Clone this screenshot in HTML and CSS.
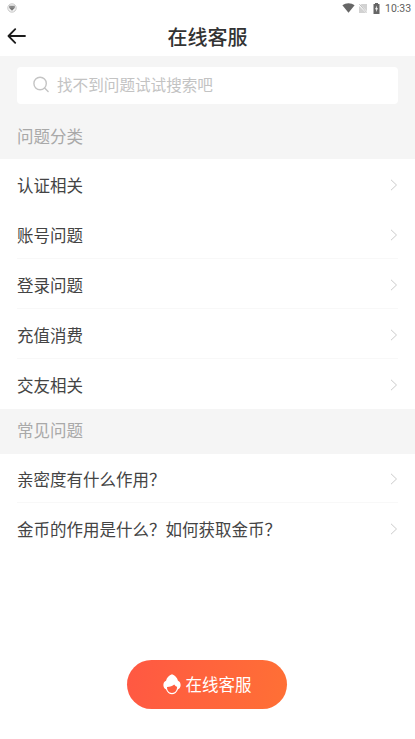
FILE: index.html
```html
<!DOCTYPE html>
<html lang="zh-CN">
<head>
<meta charset="utf-8">
<title>在线客服</title>
<link rel="stylesheet" href="styles.css">
</head>
<body>
<div class="status">
  <svg class="status-app" width="10" height="10" viewBox="0 0 10 10"><circle cx="5" cy="5" r="4.2" fill="#f4f4f4" stroke="#bbb" stroke-width=".8"/><path d="M2.3 2.7h5.4v2.2L5 7.8 2.3 4.9z" fill="#777"/><path d="M3.3 4h1.2M5.5 4h1.2" stroke="#ddd" stroke-width=".6"/></svg>
  <div class="status-right">
    <svg class="wifi" width="13" height="10" viewBox="0 0 13 10"><path d="M.4 2.3C3.8-.5 9.2-.5 12.6 2.3L6.5 9.8z" fill="#666"/></svg>
    <svg class="sim" width="8" height="9" viewBox="0 0 8 9"><path d="M2.5 0H8v9H0V2.5z" fill="#d2d2d2"/><path d="M0 .6l8 8" stroke="#fff" stroke-width="1.8"/><path d="M.4.2l7.4 8.4" stroke="#aaa" stroke-width=".8"/></svg>
    <svg class="battery" width="7" height="11" viewBox="0 0 7 11"><path d="M2 0h3v1h1.5v10H.5V1H2z" fill="#666"/><path d="M4 2.5L2 6.2h1.3L3 9l2-3.8H3.7z" fill="#fff"/></svg>
    <span class="time">10:33</span>
  </div>
</div>
<header class="header">
  <svg class="back" width="20" height="16" viewBox="0 0 20 16" fill="none" stroke="#1c1c1c" stroke-width="1.8" stroke-linecap="round" stroke-linejoin="round"><path d="M8.2 1.2L1.5 8l6.7 6.8M1.8 8H18"/></svg>
  <h1 class="title">在线客服</h1>
</header>
<section class="top">
  <div class="search">
    <svg width="17" height="17" viewBox="0 0 17 17" fill="none" stroke="#c4c4c4" stroke-width="1.4" stroke-linecap="round"><circle cx="7.1" cy="7.5" r="6.2"/><path d="M11.6 12.1l3.5 3.4"/></svg>
    <span>找不到问题试试搜索吧</span>
  </div>
  <h2 class="label">问题分类</h2>
</section>
<ul class="list categories">
  <li class="row faint"><span>认证相关</span><svg class="arrow" viewBox="0 0 8 12"><path d="M1 .8l5.5 5.2L1 11.2"/></svg></li>
  <li class="row"><span>账号问题</span><svg class="arrow" viewBox="0 0 8 12"><path d="M1 .8l5.5 5.2L1 11.2"/></svg></li>
  <li class="row"><span>登录问题</span><svg class="arrow" viewBox="0 0 8 12"><path d="M1 .8l5.5 5.2L1 11.2"/></svg></li>
  <li class="row"><span>充值消费</span><svg class="arrow" viewBox="0 0 8 12"><path d="M1 .8l5.5 5.2L1 11.2"/></svg></li>
  <li class="row last"><span>交友相关</span><svg class="arrow" viewBox="0 0 8 12"><path d="M1 .8l5.5 5.2L1 11.2"/></svg></li>
</ul>
<h2 class="label band">常见问题</h2>
<ul class="list">
  <li class="row"><span>亲密度有什么作用？</span><svg class="arrow" viewBox="0 0 8 12"><path d="M1 .8l5.5 5.2L1 11.2"/></svg></li>
  <li class="row last"><span>金币的作用是什么？如何获取金币？</span><svg class="arrow" viewBox="0 0 8 12"><path d="M1 .8l5.5 5.2L1 11.2"/></svg></li>
</ul>
<footer class="footer">
  <button class="chat">
    <svg width="18" height="21" viewBox="0 0 18 21"><path d="M9 .3C12 1.3 14.2 3.8 15 6.8c1.8.8 2.8 2.6 2.6 4.6-.1 2-1.3 3.3-2.5 3.9-1.2 3.1-3.5 5-6.1 5s-4.9-1.9-6.1-5C1.7 14.7.5 13.3.4 11.4c-.2-2 .8-3.8 2.6-4.6C3.8 3.8 6 1.3 9 .3z" fill="#fff"/><path d="M4 13c2.9 0 5.8-.9 7.2-2.4.8 1.3 1.7 1.9 2.9 2.2 0 3.7-2 6.1-5.1 6.1S4 16.6 4 13z" fill="#ff5d3f"/></svg>
    <span>在线客服</span>
  </button>
</footer>
</body>
</html>
```
FILE: styles.css
```css
* { box-sizing: border-box; }
body {
  margin: 0;
  height: 739px;
  display: flex;
  flex-direction: column;
  overflow: hidden;
  background: #fff;
  color: #444;
  font-family: "Noto Sans CJK SC", sans-serif;
}
svg { display: block; flex: none; }
h1, h2, ul { margin: 0; padding: 0; }
.status {
  height: 17px;
  flex: none;
  display: flex;
  justify-content: space-between;
  align-items: center;
  padding: 0 5px 1px 7px;
}
.status-right { display: flex; align-items: center; }
.sim { margin-left: 4px; }
.battery { margin-left: 6px; }
.time {
  width: 25px;
  margin-left: 5px;
  font: 10.5px/16px Roboto, sans-serif;
  color: #606060;
  white-space: nowrap;
  padding-top: 1px;
}
.header {
  height: 39px;
  flex: none;
  display: grid;
  grid-template-columns: 60px 1fr 60px;
  align-items: center;
}
.back { margin: 0 0 1px 7px; }
.title {
  text-align: center;
  font-size: 20px;
  line-height: 37px;
  padding-bottom: 1px;
  font-weight: 500;
  color: #333;
}
.top {
  height: 103px;
  flex: none;
  padding-top: 11px;
  background: #f5f5f5;
}
.search {
  height: 37px;
  margin: 0 17px;
  padding: 0 0 2px 16px;
  display: flex;
  align-items: center;
  gap: 7px;
  background: #fff;
  border-radius: 4px;
  font-size: 15.6px;
  line-height: 33px;
  color: #c3c3c3;
}
.search span { padding-bottom: 1px; }
.label {
  padding: 0 17px;
  font-size: 16.5px;
  font-weight: 400;
  color: #a9a9a9;
  line-height: 24px;
}
.top .label { margin-top: 20px; }
.band {
  height: 45px;
  flex: none;
  line-height: 43px;
  background: #f5f5f5;
}
.list { list-style: none; flex: none; }
.categories { height: 250px; }
.row {
  height: 50px;
  margin-left: 17px;
  padding: 1px 17px 0 0;
  display: flex;
  align-items: center;
  justify-content: space-between;
  font-size: 16.5px;
  line-height: 24px;
  background: linear-gradient(#f8f8f8, #f8f8f8) left bottom / calc(100% - 17px) 1px no-repeat;
}
.row span { padding-top: 1px; }
.band + .list { margin-top: -1px; }
.faint, .last { background: none; }
.arrow {
  width: 8px;
  height: 12px;
  fill: none;
  stroke: #cbcbcb;
  stroke-width: 1;
}
.footer {
  margin-top: auto;
  padding: 0 1px 30px 0;
  display: flex;
  justify-content: center;
}
.chat {
  width: 160px;
  height: 49px;
  padding: 0 0 1px;
  border: 0;
  border-radius: 25px;
  display: flex;
  align-items: center;
  justify-content: center;
  gap: 5px;
  background: linear-gradient(100deg, #ff5843, #ff7035);
  color: #fff;
  font: 16.5px/24px "Noto Sans CJK SC", sans-serif;
}
.chat span { padding-bottom: 1px; }
```
